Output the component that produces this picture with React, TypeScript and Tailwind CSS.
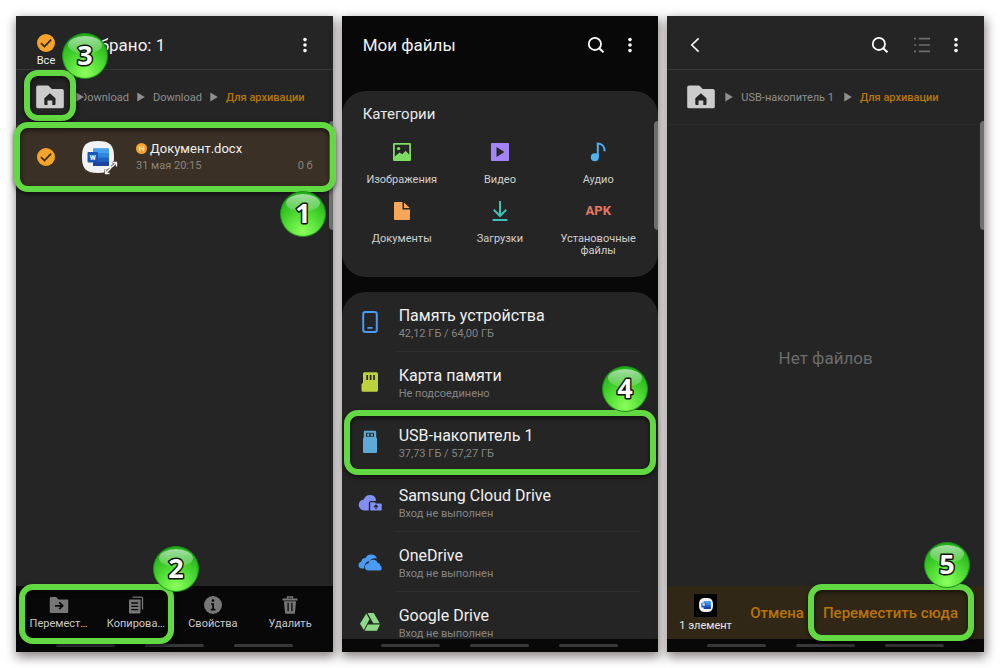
import { ReactNode } from 'react'

type CardProps = { children: ReactNode; className?: string }

/* ---------- Icons ---------- */

function DotsIcon() {
  return (
    <svg viewBox="0 0 4 16" className="w-1 h-4" fill="#fafafa">
      <circle cx="2" cy="2.6" r="1.8" />
      <circle cx="2" cy="8" r="1.8" />
      <circle cx="2" cy="13.6" r="1.8" />
    </svg>
  )
}

function SearchIcon() {
  return (
    <svg viewBox="0 0 18 18" className="w-[18px] h-[18px]" fill="none" stroke="#fafafa" strokeWidth="1.8">
      <circle cx="7.9" cy="7.9" r="6.1" />
      <path d="M12.2 12.2l4.3 4.1" strokeWidth="2" />
    </svg>
  )
}

function BackIcon() {
  return (
    <svg viewBox="0 0 10 16" className="w-2.5 h-4" fill="none" stroke="#fafafa" strokeWidth="1.6">
      <path d="M8.6 1.4L1.8 8l6.8 6.6" />
    </svg>
  )
}

function ListIcon() {
  return (
    <svg viewBox="0 0 18 16" className="w-[18px] h-4" stroke="#6e6e6e" strokeWidth="1.6">
      <path d="M1 1.6h2M1 8h2M1 14.4h2M5.8 1.6H17M5.8 8H17M5.8 14.4H17" />
    </svg>
  )
}

function HomeFolderIcon() {
  return (
    <svg viewBox="0 0 28 24" className="w-7 h-6">
      <path d="M2 .5h9.5q1 0 1.6.7l2.6 2.9H26q1.8 0 1.8 1.8v15.8q0 1.6-1.8 1.6H2q-1.8 0-1.8-1.6V2.3Q.2.5 2 .5z" fill="#cccccc" />
      <path d="M13.9 8.3l5.6 5v5.8q0 1-1 1h-2.2v-4.5h-4.8v4.5H9.3q-1 0-1-1v-5.8z" fill="#252525" />
    </svg>
  )
}

function ArrowIcon() {
  return (
    <svg viewBox="0 0 8 10" className="w-2 h-2.5 shrink-0" fill="#8f8f8f">
      <path d="M.3.4L7.8 5 .3 9.6z" />
    </svg>
  )
}

function WordIcon({ className }: { className?: string }) {
  return (
    <svg viewBox="0 0 32 32" className={className}>
      <path d="M16 0C28 0 32 4 32 16s-4 16-16 16S0 28 0 16 4 0 16 0z" fill="#f3f3f3" />
      <rect x="11" y="7.5" width="16" height="17.5" rx="1.2" fill="#2f86dc" />
      <path d="M11 7.5h15q1 0 1 1V12H11z" fill="#47a0ee" />
      <path d="M11 16.5h16v4H11z" fill="#1f62c4" />
      <path d="M11 20.5h16v3.3q0 1.2-1.2 1.2H11z" fill="#1a459c" />
      <rect x="5.5" y="11" width="10.5" height="10.5" rx="1" fill="#1b56b4" />
      <text x="10.75" y="19" textAnchor="middle" fontSize="7" fontWeight="700" fill="#fff" fontFamily="Roboto, sans-serif">W</text>
    </svg>
  )
}

function ExpandIcon() {
  return (
    <svg viewBox="0 0 14 14" className="w-3.5 h-3.5" fill="none">
      <path d="M8.5 1.5h4v4M12.5 1.5L8 6M5.5 12.5h-4v-4M1.5 12.5L6 8" stroke="#3a3025" strokeOpacity=".6" strokeWidth="3.4" />
      <path d="M8.5 1.5h4v4M12.5 1.5L8 6M5.5 12.5h-4v-4M1.5 12.5L6 8" stroke="#f2f2f2" strokeWidth="1.3" />
    </svg>
  )
}

function MoveIcon() {
  return (
    <svg viewBox="0 0 20 18" className="w-5 h-[18px]">
      <path d="M.8 1.8q0-.8.8-.8h5.6l2.2 2.4h9q.8 0 .8.8v12q0 .8-.8.8H1.6q-.8 0-.8-.8z" fill="#777" />
      <path d="M6 9.800h7M10.200 6.400l3.500 3.400-3.500 3.400" fill="none" stroke="#080808" strokeWidth="1.7" />
    </svg>
  )
}

function CopyIcon() {
  return (
    <svg viewBox="0 0 18 18" className="w-[18px] h-[18px]">
      <path d="M5.5 1.2h9q1 0 1 1v11.3" fill="none" stroke="#777" strokeWidth="1.3" />
      <rect x="2" y="3.4" width="11.5" height="14" rx=".8" fill="#777" />
      <path d="M4.2 7h7M4.2 10.3h7M4.2 13.6h7" stroke="#080808" strokeWidth="1.3" />
    </svg>
  )
}

function InfoIcon() {
  return (
    <svg viewBox="0 0 18 18" className="w-[18px] h-[18px]">
      <circle cx="9" cy="9" r="9" fill="#777" />
      <circle cx="9" cy="4.6" r="1.3" fill="#080808" />
      <path d="M7 8h2.1v5.500M6.800 13.700h4.600" stroke="#080808" strokeWidth="1.7" fill="none" />
    </svg>
  )
}

function TrashIcon() {
  return (
    <svg viewBox="0 0 18 18" className="w-[18px] h-[18px]">
      <path d="M1.5 2.5h15v2h-15z" fill="#777" />
      <path d="M6.5 2.8V1h5v1.8" fill="none" stroke="#777" strokeWidth="1.4" />
      <path d="M3 5.2h12l-1 11.5q-.1 1-1 1H5q-.9 0-1-1z" fill="#777" />
      <path d="M7.1 6.8v8.5M10.9 6.8v8.5" stroke="#080808" strokeWidth="1.3" />
    </svg>
  )
}

function ImageIcon() {
  return (
    <svg viewBox="0 0 18 18" className="w-[18px] h-[18px]">
      <rect width="18" height="18" rx="1.2" fill="#7fdc63" />
      <path d="M1.8 1.8h14.4v9.7L12.6 7.8 9.300 11.200 6.500 9.500 1.800 13.500z" fill="#252525" />
      <circle cx="5.6" cy="5.6" r="1.7" fill="#7fdc63" />
    </svg>
  )
}

function VideoIcon() {
  return (
    <svg viewBox="0 0 18 18" className="w-[18px] h-[18px]">
      <rect width="18" height="18" rx="1" fill="#a184f5" />
      <path d="M5.5 4L13.5 9l-8 5z" fill="#252525" />
    </svg>
  )
}

function AudioIcon() {
  return (
    <svg viewBox="0 0 18 20" className="w-[18px] h-5">
      <circle cx="5.8" cy="15.2" r="4" fill="#4fb0ee" />
      <path d="M8.8 15V1.5c4 .2 7 3 6.8 7.8" fill="none" stroke="#4fb0ee" strokeWidth="2" />
    </svg>
  )
}

function DocIcon() {
  return (
    <svg viewBox="0 0 18 18" className="w-[18px] h-[18px]" fill="#f7a65a">
      <path d="M1 1q0-.9.9-.9h7.6v7.4H17v9.6q0 .9-.9.9H1.9Q1 18 1 17.1z" />
      <path d="M11 .6l5.8 5.5H11z" />
    </svg>
  )
}

function DownloadIcon() {
  return (
    <svg viewBox="0 0 18 20" className="w-[18px] h-5" fill="none" stroke="#3fc0b5" strokeWidth="2">
      <path d="M9 0v15M2.8 8.8L9 15l6.2-6.2M1.5 19h15" />
    </svg>
  )
}

function PhoneIcon() {
  return (
    <svg viewBox="0 0 24 24" className="w-6 h-6" fill="none" stroke="#4a9bf5" strokeWidth="2">
      <rect x="5.2" y="2" width="13.6" height="20" rx="2.2" />
      <path d="M9.5 17.8h5" strokeWidth="1.8" />
    </svg>
  )
}

function SdCardIcon() {
  return (
    <svg viewBox="0 0 24 24" className="w-6 h-6">
      <path d="M6.5 2.2h12q1.500 0 1.500 1.500v16.600q0 1.500-1.500 1.500H5q-1.500 0-1.500-1.500v-6L5 12.500V3.700q0-1.500 1.500-1.500z" fill="#bdd13d" />
      <path d="M9.200 5v5M12.600 5v5M16 5v5" stroke="#252525" strokeWidth="1.7" />
    </svg>
  )
}

function UsbIcon() {
  return (
    <svg viewBox="0 0 24 24" className="w-6 h-6">
      <path d="M7 .8h10q1.200 0 1.200 1.200v6H5.800V2q0-1.200 1.200-1.200z" fill="#5fa8d8" />
      <path d="M8 2.800h8v4H8z" fill="#252525" />
      <path d="M9.200 3.400h2v2.800h-2zM12.800 3.400h2v2.800h-2z" fill="#5fa8d8" />
      <rect x="5" y="7.600" width="14" height="15.400" rx="1.300" fill="#5fa8d8" />
    </svg>
  )
}

function SamsungCloudIcon() {
  return (
    <svg viewBox="0 0 24 24" className="w-6 h-6">
      <path d="M10.800 20.500H6.500a5.500 5.500 0 0 1-.6-11A6.300 6.300 0 0 1 18 9.400q0 .9-.3 1.600H13q-2.200 0-2.200 2z" fill="#8390f3" />
      <path d="M12.200 12.200h4.500l1.200 1.300h5q.8 0 .8.800v5.400q0 .8-.8.800H12.200z" fill="#8390f3" />
      <path d="M18 19.300v-3.800M16 17.200l2-2 2 2" stroke="#252525" strokeWidth="1.200" fill="none" />
    </svg>
  )
}

function OneDriveIcon() {
  return (
    <svg viewBox="0 0 24 24" className="w-6 h-6" fill="#4a9bf5">
      <path d="M6.300 18.500H3.500a3.400 3.400 0 0 1-.3-6.700q.3-3.700 4.300-3.900A6.300 6.300 0 0 1 19 8.500q-5.200-1-7.500 2.600Q6.300 12 6.300 18.500z" />
      <path d="M10.500 20.500a3.500 3.500 0 0 1-.2-7 4.900 4.900 0 0 1 9.400-.6q2.600.2 2.600 2.700 1.400.6 1.400 2.300 0 2.600-2.400 2.600z" />
    </svg>
  )
}

function GoogleDriveIcon() {
  return (
    <svg viewBox="0 0 24 24" className="w-6 h-6" fill="#8fd98a">
      <path d="M8.300 3.500l3.200 5.800L5.800 20 2 13.800z" />
      <path d="M9.500 3h6.200l6 10.300h-6.400z" />
      <path d="M9.800 14.600H22l-3 6.200H6.500z" />
    </svg>
  )
}

/* ---------- Shared parts ---------- */

function Screen({ children, className = 'bg-[#252525]' }: CardProps) {
  return (
    <section className={`relative flex flex-col min-w-0 shadow-[1px_4px_10px_1px_rgba(60,50,50,0.6)] ${className}`}>
      {children}
    </section>
  )
}

function Frame({ className }: { className: string }) {
  return (
    <span
      className={`absolute z-10 pointer-events-none rounded-[14px] border-6 border-[#62d843] shadow-[0_2px_5px_rgba(0,0,0,0.6),inset_0_2px_5px_rgba(0,0,0,0.6)] ${className}`}
    />
  )
}

function Step({ n, className }: { n: number; className: string }) {
  return (
    <svg viewBox="0 0 46 46" className={`absolute z-20 w-[46px] h-[46px] pointer-events-none ${className}`}>
      <defs>
        <radialGradient id={`ball-${n}`} cx="50%" cy="88%" r="80%">
          <stop offset="0" stopColor="#8cff5c" />
          <stop offset=".5" stopColor="#4fdc34" />
          <stop offset="1" stopColor="#22b01a" />
        </radialGradient>
        <linearGradient id={`shine-${n}`} x1="0" y1="0" x2="0" y2="1">
          <stop offset="0" stopColor="#fff" stopOpacity=".6" />
          <stop offset="1" stopColor="#fff" stopOpacity=".12" />
        </linearGradient>
      </defs>
      <circle cx="23" cy="23" r="22.5" fill={`url(#ball-${n})`} stroke="#1a8f16" />
      <ellipse cx="23" cy="12" rx="17" ry="9" fill={`url(#shine-${n})`} />
      <text
        x="23"
        y="32"
        textAnchor="middle"
        fontFamily="Open Sans, sans-serif"
        fontSize="27"
        fontWeight="700"
        fill="#fff"
        stroke="#101010"
        strokeWidth="3"
        strokeLinejoin="round"
        paintOrder="stroke"
      >
        {n}
      </text>
    </svg>
  )
}

function Check({ label }: { label: string }) {
  return (
    <span className="relative block w-[18px] h-[18px]">
      <input type="checkbox" defaultChecked aria-label={label} className="block appearance-none w-[18px] h-[18px] rounded-full bg-[#f5a32b]" />
      <svg viewBox="0 0 18 18" className="absolute inset-0 pointer-events-none" fill="none" stroke="#33291c" strokeWidth="1.7">
        <path d="M4 9.2l3.5 3.3 6.6-6.9" />
      </svg>
    </span>
  )
}

function IconButton({ label, children, className = '' }: CardProps & { label: string }) {
  return (
    <button aria-label={label} className={`w-6 h-6 flex items-center justify-center shrink-0 ${className}`}>
      {children}
    </button>
  )
}

function NavBar() {
  return (
    <div className="h-[13px] bg-[#080808] flex items-center justify-center gap-[30px]">
      <span className="w-[59px] h-[3px] rounded-full bg-[#383838]" />
      <span className="w-[59px] h-[3px] rounded-full bg-[#383838]" />
      <span className="w-[59px] h-[3px] rounded-full bg-[#383838]" />
    </div>
  )
}

function ScrollThumb() {
  return <span className="absolute right-0 top-[105px] w-1 h-[109px] rounded-l-full bg-[#6f6f6f]" />
}

function Action({ icon, label }: { icon: ReactNode; label: string }) {
  return (
    <button className="flex-1 min-w-0 flex flex-col items-center gap-1 pt-2.5 text-[11px] leading-3 text-[#c8c8c8]">
      {icon}
      <span className="whitespace-nowrap">{label}</span>
    </button>
  )
}

/* ---------- Screens ---------- */

function SelectScreen() {
  return (
    <Screen>
      <header className="relative h-[54px] pt-[5px] pl-5 pr-4 flex items-center border-b border-[#383838]">
        <label className="self-end pb-0.5 w-5 flex flex-col items-center gap-[3px] text-[11px] leading-3 text-[#f0f0f0]">
          <Check label="Все" />
          Все
        </label>
        <h1 className="ml-5 text-[17px] leading-6 text-[#f0f0f0]">Выбрано: 1</h1>
        <IconButton label="Ещё" className="ml-auto">
          <DotsIcon />
        </IconButton>
        <Step n={3} className="left-[46px] top-[17px]" />
      </header>

      <nav className="h-[55px] pl-5 flex items-center text-[11px] text-[#8f8f8f] border-b border-[#2b2b2b]">
        <a href="#home" aria-label="Мои файлы" className="relative shrink-0">
          <HomeFolderIcon />
          <Frame className="-inset-x-3 -top-[15px] -bottom-3" />
        </a>
        <a href="#root" className="relative ml-4 pt-0.5">
          Download
          <span className="absolute -left-1 top-0 h-full flex items-center bg-[#252525]">
            <ArrowIcon />
          </span>
        </a>
        <span className="mx-2 flex">
          <ArrowIcon />
        </span>
        <a href="#download" className="pt-0.5">Download</a>
        <span className="mx-2 flex">
          <ArrowIcon />
        </span>
        <a href="#archive" className="pt-0.5 font-medium text-[#b97707] whitespace-nowrap">Для архивации</a>
      </nav>

      <div className="relative h-[63px] pl-[21px] pr-5 flex items-center bg-[#3a3025]">
        <Check label="Документ.docx" />
        <span className="relative ml-[27px] shrink-0">
          <WordIcon className="w-8 h-8" />
          <span className="absolute -right-1 -bottom-0.5">
            <ExpandIcon />
          </span>
        </span>
        <div className="ml-[22px] flex-1 min-w-0">
          <p className="flex items-center gap-[3px] text-[13px] leading-[18px] text-[#f0f0f0]">
            <span className="w-[11px] h-[11px] rounded-full bg-[#f5a32b] text-white text-[8px] leading-[11px] text-center">H</span>
            Документ.docx
          </p>
          <p className="flex justify-between text-[11px] leading-4 text-[#8a847c]">
            <span>31 мая 20:15</span>
            <span>0 б</span>
          </p>
        </div>
        <Frame className="-left-0.5 -right-[3px] -top-[3px] -bottom-1" />
        <Step n={1} className="right-[7px] top-[66px]" />
      </div>

      <main className="flex-1" />
      <ScrollThumb />

      <footer className="bg-[#080808]">
        <div className="h-[53px] px-1 flex">
          <div className="relative flex-1 min-w-0 flex">
            <Action icon={<MoveIcon />} label="Перемест…" />
            <Action icon={<CopyIcon />} label="Копирова…" />
            <Frame className="-left-px right-0 -top-0.5 -bottom-[5px]" />
            <Step n={2} className="-right-[25px] -top-10" />
          </div>
          <div className="flex-1 min-w-0 flex">
            <Action icon={<InfoIcon />} label="Свойства" />
            <Action icon={<TrashIcon />} label="Удалить" />
          </div>
        </div>
        <NavBar />
      </footer>
    </Screen>
  )
}

const categories = [
  { label: 'Изображения', icon: <ImageIcon /> },
  { label: 'Видео', icon: <VideoIcon /> },
  { label: 'Аудио', icon: <AudioIcon /> },
  { label: 'Документы', icon: <DocIcon /> },
  { label: 'Загрузки', icon: <DownloadIcon /> },
  { label: 'Установочные файлы', icon: <span className="text-[13px] font-bold text-[#e8775f]">APK</span> },
]

const storages = [
  { name: 'Память устройства', info: '42,12 ГБ / 64,00 ГБ', icon: <PhoneIcon /> },
  { name: 'Карта памяти', info: 'Не подсоединено', icon: <SdCardIcon /> },
  { name: 'USB-накопитель 1', info: '37,73 ГБ / 57,27 ГБ', icon: <UsbIcon />, step: 4 },
  { name: 'Samsung Cloud Drive', info: 'Вход не выполнен', icon: <SamsungCloudIcon /> },
  { name: 'OneDrive', info: 'Вход не выполнен', icon: <OneDriveIcon /> },
  { name: 'Google Drive', info: 'Вход не выполнен', icon: <GoogleDriveIcon /> },
]

function FilesScreen() {
  return (
    <Screen className="bg-[#080808]">
      <header className="pt-[17px] h-[75px] pl-[21px] pr-4 flex items-start gap-2.5">
        <h1 className="flex-1 text-[17px] leading-6 text-[#f0f0f0]">Мои файлы</h1>
        <IconButton label="Поиск">
          <SearchIcon />
        </IconButton>
        <IconButton label="Ещё">
          <DotsIcon />
        </IconButton>
      </header>

      <section className="h-[186px] pt-[13px] rounded-3xl bg-[#252525]">
        <h2 className="pl-[21px] text-[15px] leading-5 text-[#e8e8e8]">Категории</h2>
        <div className="px-[11px] mt-[18px] grid grid-cols-3 gap-y-1">
          {categories.map((c) => (
            <button key={c.label} className="h-[55px] flex flex-col items-center text-[11px] leading-3 text-[#d0d0d0]">
              <span className="h-5 mb-3 shrink-0 flex items-center">{c.icon}</span>
              <span className="max-w-20">{c.label}</span>
            </button>
          ))}
        </div>
      </section>

      <section className="mt-[15px] flex-1 basis-0 min-h-0">
        <ul className="h-[347px] rounded-t-3xl bg-[#252525] [clip-path:inset(-10px_-10px_0_-10px)]">
          {storages.map((s, i) => (
            <li key={s.name} className="relative h-[60px]">
              <button className="w-full h-full pl-4 pr-[18px] flex items-center gap-3.5 text-left">
                <span className="shrink-0">{s.icon}</span>
                <span className={`flex-1 h-full pl-[3px] pt-[13px] ${i < 5 ? 'border-b border-[#2e2e2e]' : ''}`}>
                  <span className="block text-base leading-[22px] text-[#f0f0f0]">{s.name}</span>
                  <span className="block text-[11px] leading-[14px] text-[#858585]">{s.info}</span>
                </span>
              </button>
              {s.step && (
                <>
                  <Frame className="left-0.5 right-0.5 -top-0.5 -bottom-[3px]" />
                  <Step n={s.step} className="right-2.5 -top-[46px]" />
                </>
              )}
            </li>
          ))}
        </ul>
      </section>
      <ScrollThumb />
      <NavBar />
    </Screen>
  )
}

function MoveScreen() {
  return (
    <Screen>
      <header className="h-[54px] pt-[5px] pl-4 pr-4 flex items-center gap-2.5 border-b border-[#383838]">
        <IconButton label="Назад" className="mr-auto">
          <BackIcon />
        </IconButton>
        <IconButton label="Поиск" className="mr-2">
          <SearchIcon />
        </IconButton>
        <IconButton label="Вид списка">
          <ListIcon />
        </IconButton>
        <IconButton label="Ещё">
          <DotsIcon />
        </IconButton>
      </header>

      <nav className="h-[55px] pl-5 flex items-center text-[11px] text-[#8f8f8f] border-b border-[#2b2b2b]">
        <a href="#home" aria-label="Мои файлы" className="shrink-0">
          <HomeFolderIcon />
        </a>
        <span className="ml-2.5 mr-2 flex">
          <ArrowIcon />
        </span>
        <a href="#usb" className="pt-0.5 whitespace-nowrap">USB-накопитель 1</a>
        <span className="ml-2.5 mr-2 flex">
          <ArrowIcon />
        </span>
        <a href="#archive" className="pt-0.5 font-medium text-[#b97707] whitespace-nowrap">Для архивации</a>
      </nav>
      <ScrollThumb />

      <main className="flex-1 pt-1 flex items-center justify-center">
        <p className="text-[17px] leading-6 text-[#6c6c6c]">Нет файлов</p>
      </main>

      <footer>
        <div className="h-[53px] pl-3 pr-[18px] flex items-center bg-[#312716] text-[15px] font-medium text-[#b87309]">
          <div className="flex flex-col items-center gap-[3px] text-[11px] leading-3 font-normal text-[#e8e8e8]">
            <span className="w-[23px] h-[23px] bg-black flex items-center justify-center">
              <WordIcon className="w-3.5 h-3.5" />
            </span>
            1 элемент
          </div>
          <button className="ml-auto pt-0.5">Отмена</button>
          <div className="relative ml-1 h-full flex">
            <button className="pl-[15px] pr-2 pt-0.5 whitespace-nowrap">Переместить сюда</button>
            <Frame className="left-0 -right-2 -top-0.5 -bottom-0.5" />
            <Step n={5} className="-right-1 -top-11" />
          </div>
        </div>
        <NavBar />
      </footer>
    </Screen>
  )
}

export default function App() {
  return (
    <div className="min-h-screen bg-white p-4 grid grid-cols-3 gap-[9px] font-[Roboto,sans-serif]">
      <SelectScreen />
      <FilesScreen />
      <MoveScreen />
    </div>
  )
}
